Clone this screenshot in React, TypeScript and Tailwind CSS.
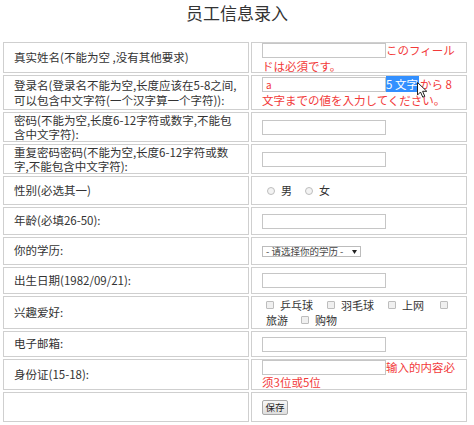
import React from 'react'

const labelCell =
  'border border-[#cfcfcf] pl-[10px] pr-0 py-0 align-middle text-[11.5px] text-[#333] whitespace-nowrap'
const fieldCell = 'border border-[#cfcfcf] pl-[10px] pr-0 py-0 align-middle text-[11.5px] text-[#333] whitespace-nowrap'
const jp = "font-['Noto_Sans_CJK_JP',sans-serif]"
const red = 'text-[#f23a3a]'

function TextInput({ value = '' }: { value?: string }) {
  return (
    <input
      type="text"
      defaultValue={value}
      className={`block w-[124px] h-[15px] shrink-0 border border-[#c6c6c6] bg-white px-[3px] py-0 text-[10px] leading-[13px] ${red} outline-none`}
    />
  )
}

function Radio({ label }: { label: string }) {
  return (
    <label className="inline-flex items-center">
      <input
        type="radio"
        name="sex"
        className="appearance-none w-[8px] h-[8px] rounded-full border border-[#bdbdbd] bg-[#f3f3f3] ml-[5px] mr-[6px]"
      />
      <span>{label}</span>
    </label>
  )
}

function Check({ label, gap = 'ml-[14px]' }: { label?: string; gap?: string }) {
  return (
    <label className={`inline-flex items-center ${gap}`}>
      <input
        type="checkbox"
        className="appearance-none w-[8px] h-[8px] rounded-[1px] border border-[#bdbdbd] bg-[#f0f0f0]"
      />
      {label && <span className="ml-[6px]">{label}</span>}
    </label>
  )
}

function Cursor() {
  return (
    <svg className="absolute left-[155px] top-[6px]" width="11" height="17" viewBox="0 0 11 17">
      <path
        d="M0.5 0.5 L0.5 13 L3.5 10 L5.8 15.2 L7.8 14.3 L5.6 9.3 L9.8 9.3 Z"
        fill="#fff"
        stroke="#222"
        strokeWidth="1"
        strokeLinejoin="round"
      />
    </svg>
  )
}

export default function App() {
  return (
    <div className="w-[474px] h-[425px] bg-white font-['Noto_Sans_CJK_SC',sans-serif] text-[#333]">
      <div className="h-[40px] pt-[2px] text-center text-[17px] leading-[22px]">员工信息录入</div>
      <table className="ml-px w-[468px] table-fixed border-separate border-spacing-[2px]">
        <colgroup>
          <col className="w-[246px]" />
          <col className="w-[216px]" />
        </colgroup>
        <tbody>
          <tr className="h-[31px]">
            <td className={labelCell}>真实姓名(不能为空 ,没有其他要求)</td>
            <td className={`${fieldCell} !align-top`}>
              <div className="flex items-center h-[15px]">
                <TextInput />
                <span className={`${jp} ${red} text-[11.5px] leading-[15px]`}>このフィール</span>
              </div>
              <div className={`${jp} ${red} text-[11.5px] h-[13px] leading-[15px] mt-[1px]`}>ドは必須です。</div>
            </td>
          </tr>
          <tr className="h-[35px]">
            <td className={`${labelCell} leading-[15px]`}>
              登录名(登录名不能为空,长度应该在5-8之间,
              <br />
              可以包含中文字符(一个汉字算一个字符)):
            </td>
            <td className={`${fieldCell} !align-top`}>
              <div className="relative flex items-center h-[16px]">
                <TextInput value="a" />
                <span className={`${jp} bg-[#3390ff] text-white text-[11.5px] h-[16px] leading-[16px] pr-[1px]`}>5 文字</span>
                <span className={`${jp} ${red} text-[11.5px] leading-[16px] ml-[1px]`}>から 8</span>
                <Cursor />
              </div>
              <div className={`${jp} ${red} text-[11.5px] leading-[16px]`}>文字までの値を入力してください。</div>
            </td>
          </tr>
          <tr className="h-[30px]">
            <td className={`${labelCell} leading-[14px]`}>
              <div className="h-[14px]">密码(不能为空,长度6-12字符或数字,不能包</div>
              <div className="h-[14px]">含中文字符):</div>
            </td>
            <td className={fieldCell}>
              <TextInput />
            </td>
          </tr>
          <tr className="h-[29px]">
            <td className={`${labelCell} leading-[14px]`}>
              <div className="h-[14px]">重复密码密码(不能为空,长度6-12字符或数</div>
              <div className="h-[14px]">字,不能包含中文字符):</div>
            </td>
            <td className={fieldCell}>
              <TextInput />
            </td>
          </tr>
          <tr className="h-[29px]">
            <td className={labelCell}>性别(必选其一)</td>
            <td className={fieldCell}>
              <div className="flex items-center text-[11px]">
                <Radio label="男" />
                <span className="w-[8px]" />
                <Radio label="女" />
              </div>
            </td>
          </tr>
          <tr className="h-[28px]">
            <td className={labelCell}>年龄(必填26-50):</td>
            <td className={fieldCell}>
              <TextInput />
            </td>
          </tr>
          <tr className="h-[28px]">
            <td className={labelCell}>你的学历:</td>
            <td className={fieldCell}>
              <div className="relative flex items-center w-[99px] h-[11px] border border-[#bcbcbc] bg-white pl-[3px] text-[9.5px] leading-[9px] text-[#444]">
                - 请选择你的学历 -
                <svg className="absolute right-[3px] top-[3px]" width="5" height="4" viewBox="0 0 5 4">
                  <polygon points="0,0 5,0 2.5,4" fill="#222" />
                </svg>
              </div>
            </td>
          </tr>
          <tr className="h-[27px]">
            <td className={labelCell}>出生日期(1982/09/21):</td>
            <td className={fieldCell}>
              <TextInput />
            </td>
          </tr>
          <tr className="h-[33px]">
            <td className={labelCell}>兴趣爱好:</td>
            <td className={`${fieldCell} text-[11px] leading-[15px]`}>
              <div className="flex items-center h-[15px] pl-[4px]">
                <Check label="乒乓球" gap="" />
                <Check label="羽毛球" />
                <Check label="上网" />
                <Check gap="ml-[16px]" />
              </div>
              <div className="flex items-center h-[15px] pl-[4px]">
                <span>旅游</span>
                <Check label="购物" gap="ml-[13px]" />
              </div>
            </td>
          </tr>
          <tr className="h-[26px]">
            <td className={labelCell}>电子邮箱:</td>
            <td className={fieldCell}>
              <TextInput />
            </td>
          </tr>
          <tr className="h-[31px]">
            <td className={labelCell}>身份证(15-18):</td>
            <td className={`${fieldCell} !align-top`}>
              <div className="flex items-center h-[15px]">
                <TextInput />
                <span className={`${red} text-[11.5px] leading-[15px]`}>输入的内容必</span>
              </div>
              <div className={`${red} text-[11.5px] leading-[14px]`}>须3位或5位</div>
            </td>
          </tr>
          <tr className="h-[30px]">
            <td className={labelCell}></td>
            <td className={fieldCell}>
              <button
                type="button"
                className="block w-[26px] h-[15px] border border-[#a9a9a9] rounded-[2px] bg-linear-to-b from-[#f7f7f7] to-[#dedede] text-[9.5px] leading-[13px] text-[#222] p-0"
              >
                保存
              </button>
            </td>
          </tr>
        </tbody>
      </table>
    </div>
  )
}
